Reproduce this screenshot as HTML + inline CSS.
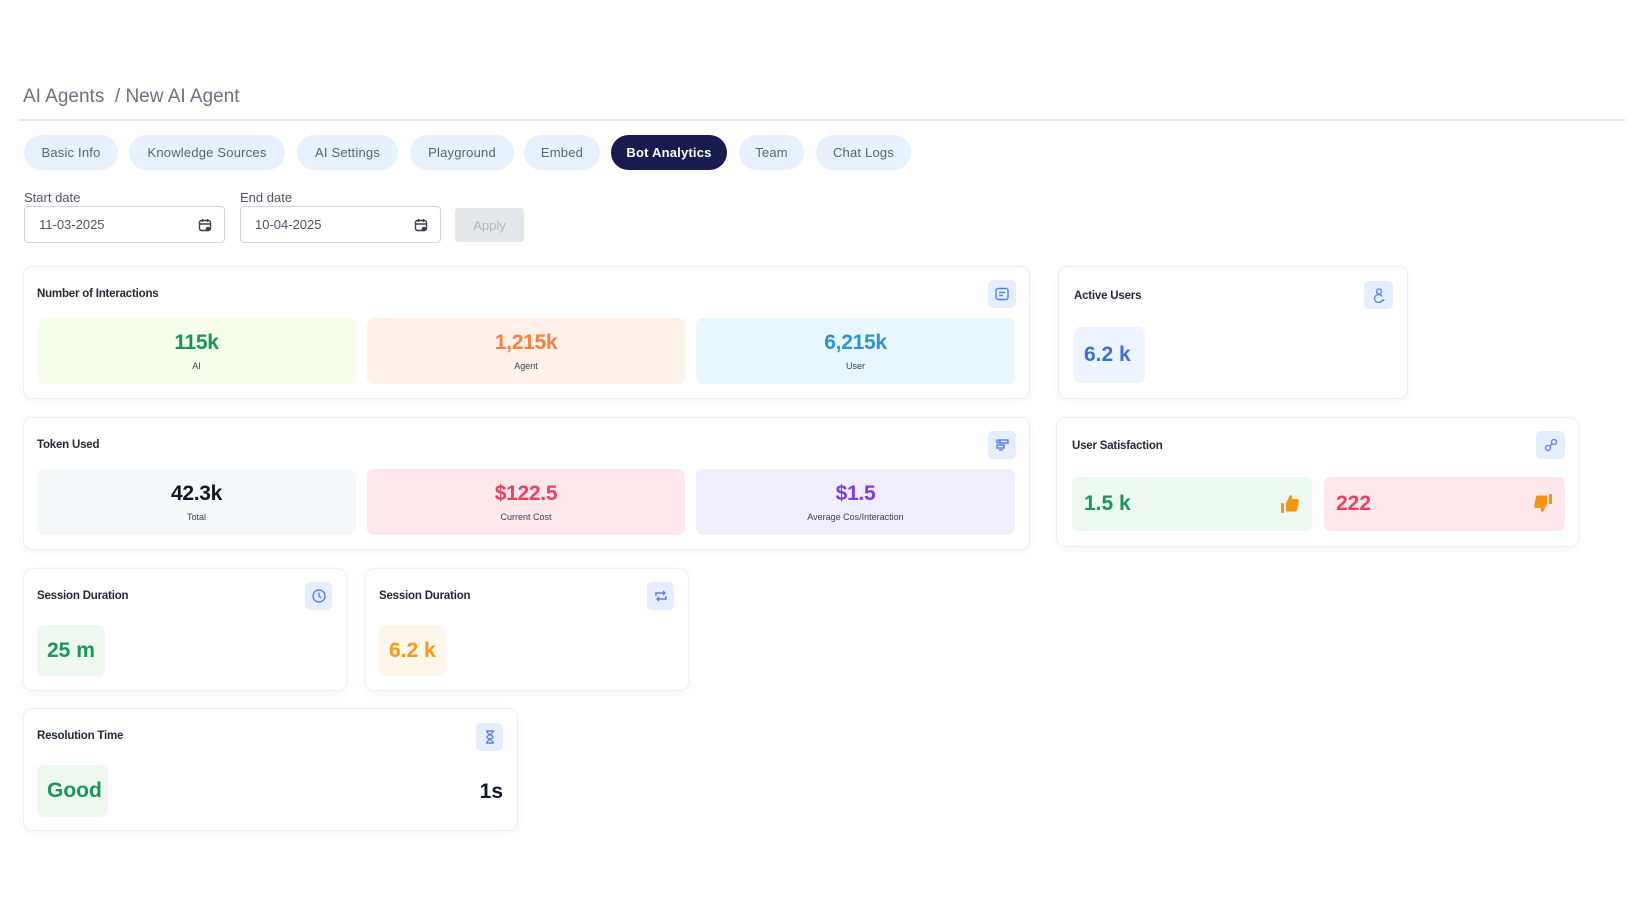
<!DOCTYPE html>
<html><head><meta charset="utf-8"><style>
*{box-sizing:border-box;margin:0;padding:0}
body{width:1632px;height:922px;background:#fff;font-family:"Liberation Sans",sans-serif;position:relative;overflow:hidden;color:#1f2937}
.a{position:absolute}
.crumb{left:23px;top:86px;font-size:19px;color:#6b7280}
.sep{left:19px;top:119px;width:1606px;height:2px;background:#e5e7eb}
.pill{position:absolute;top:135px;height:35px;border-radius:18px;background:#e7f1fd;color:#5b6472;font-size:13px;display:flex;align-items:center;justify-content:center;letter-spacing:.2px}
.pill.on{background:#181b4d;color:#fff;font-weight:bold}
.lbl{font-size:13px;color:#4b5563;top:190px}
.inp{top:206px;height:37px;border:1px solid #d1d5db;border-radius:4px;font-size:13px;color:#4b5563;padding-left:14px;display:flex;align-items:center}
.inp svg{position:absolute;right:12px;top:11px}
.apply{left:455px;top:208px;width:69px;height:34px;background:#e5e7eb;border-radius:3px;color:#b0b5bb;font-size:13px;display:flex;align-items:center;justify-content:center}
.card{position:absolute;background:#fff;border:1px solid #eef0f2;border-radius:9px;box-shadow:0 2px 10px rgba(0,0,0,.04)}
.t{position:absolute;font-size:11.5px;font-weight:bold;color:#1f2937;letter-spacing:-.2px}
.ib{position:absolute;width:28px;height:28px;border-radius:5px;background:#e5eefe;display:flex;align-items:center;justify-content:center}
.box{position:absolute;border-radius:7px;display:flex;flex-direction:column;align-items:center;justify-content:center}
.box b{font-size:21px;font-weight:bold;letter-spacing:-.3px}
.box span{font-size:9px;color:#374151;margin-top:6px}
.vb{position:absolute;border-radius:7px;display:flex;align-items:center;padding-left:10px;font-size:21px;font-weight:bold}
</style></head><body>
<div class="a crumb">AI Agents &nbsp;/ New AI Agent</div>
<div class="a sep"></div>
<div class="pill" style="left:24px;width:94px">Basic Info</div>
<div class="pill" style="left:129px;width:156px">Knowledge Sources</div>
<div class="pill" style="left:297px;width:101px">AI Settings</div>
<div class="pill" style="left:410px;width:104px">Playground</div>
<div class="pill" style="left:524px;width:76px">Embed</div>
<div class="pill on" style="left:611px;width:116px">Bot Analytics</div>
<div class="pill" style="left:739px;width:65px">Team</div>
<div class="pill" style="left:816px;width:95px">Chat Logs</div>

<div class="a lbl" style="left:24px">Start date</div>
<div class="a lbl" style="left:240px">End date</div>
<div class="a inp" style="left:24px;width:201px">11-03-2025<svg width="14" height="14" viewBox="0 0 14 14" fill="none" stroke="#374151" stroke-width="1.4"><rect x="1.5" y="2.5" width="11" height="10" rx="2"/><path d="M1.5 6h11M4.5 1v3M9.5 1v3"/><circle cx="10" cy="11" r="1.6" fill="#374151"/></svg></div>
<div class="a inp" style="left:240px;width:201px">10-04-2025<svg width="14" height="14" viewBox="0 0 14 14" fill="none" stroke="#374151" stroke-width="1.4"><rect x="1.5" y="2.5" width="11" height="10" rx="2"/><path d="M1.5 6h11M4.5 1v3M9.5 1v3"/><circle cx="10" cy="11" r="1.6" fill="#374151"/></svg></div>
<div class="a apply">Apply</div>

<div class="card" style="left:23px;top:266px;width:1007px;height:133px"></div>
<div class="t" style="left:37px;top:288px">Number of Interactions</div>
<div class="ib" style="left:988px;top:280px"><svg width="16" height="16" viewBox="0 0 16 16" fill="none" stroke="#5b7ff0" stroke-width="1.4"><rect x="2" y="2.5" width="12" height="11" rx="2"/><path d="M5 6.5h6M5 9.5h4"/></svg></div>
<div class="box" style="left:37px;top:318px;width:319px;height:66px;background:#f6fdea"><b style="color:#17975a">115k</b><span>AI</span></div>
<div class="box" style="left:367px;top:318px;width:318px;height:66px;background:#fff1ea"><b style="color:#f7813f">1,215k</b><span>Agent</span></div>
<div class="box" style="left:696px;top:318px;width:319px;height:66px;background:#eaf6fe"><b style="color:#2b96d0">6,215k</b><span>User</span></div>

<div class="card" style="left:23px;top:417px;width:1007px;height:133px"></div>
<div class="t" style="left:37px;top:439px">Token Used</div>
<div class="ib" style="left:988px;top:431px"><svg width="16" height="16" viewBox="0 0 16 16" fill="none" stroke="#5b7ff0" stroke-width="1.4"><path d="M6 3h8v3H6zM3 8h7v3H3z"/><circle cx="4" cy="4.5" r="1.5"/><path d="M5 13h4"/></svg></div>
<div class="box" style="left:37px;top:469px;width:319px;height:66px;background:#f7f8f9"><b style="color:#111827">42.3k</b><span>Total</span></div>
<div class="box" style="left:367px;top:469px;width:318px;height:66px;background:#ffe8ec"><b style="color:#f23e5f">$122.5</b><span>Current Cost</span></div>
<div class="box" style="left:696px;top:469px;width:319px;height:66px;background:#f0edfe"><b style="color:#7c3aed">$1.5</b><span>Average Cos/Interaction</span></div>

<div class="card" style="left:1058px;top:266px;width:350px;height:133px"></div>
<div class="t" style="left:1074px;top:290px">Active Users</div>
<div class="ib" style="left:1364px;top:281px;width:29px"><svg width="16" height="16" viewBox="0 0 16 16" fill="none" stroke="#5b7ff0" stroke-width="1.3"><circle cx="8" cy="4.5" r="2.5"/><path d="M11 9.5a4 4 0 1 0 0 4M11 12.5l1 1.2 1.2-1"/></svg></div>
<div class="vb" style="left:1074px;top:327px;width:71px;height:56px;background:#edf4ff;color:#3a6ee0">6.2 k</div>

<div class="card" style="left:1056px;top:417px;width:523px;height:130px"></div>
<div class="t" style="left:1072px;top:440px">User Satisfaction</div>
<div class="ib" style="left:1536px;top:431px;width:29px"><svg width="16" height="16" viewBox="0 0 16 16" fill="none" stroke="#5b7ff0" stroke-width="1.3"><circle cx="5" cy="11" r="2.5"/><circle cx="11" cy="5" r="2.5"/><path d="M7 9l2-2"/></svg></div>
<div class="vb" style="left:1072px;top:477px;width:240px;height:54px;background:#edf8f1;color:#17975a;padding-left:12px">1.5 k<svg style="position:absolute;right:12px;top:17px" width="20" height="20" viewBox="0 0 20 20" fill="#f59410"><rect x="1" y="9" width="3" height="10" rx="1"/><path d="M6 9l4-8c2 0 2.5 1.5 2 4h5c1.5 0 2 1 1.7 2.5l-1.5 8c-.3 1.3-1 2-2.5 2H6z"/></svg></div>
<div class="vb" style="left:1324px;top:477px;width:241px;height:54px;background:#ffe8ec;color:#f23e5f;padding-left:12px">222<svg style="position:absolute;right:12px;top:16px" width="20" height="20" viewBox="0 0 20 20" fill="#f59410" transform="rotate(180)"><rect x="1" y="9" width="3" height="10" rx="1"/><path d="M6 9l4-8c2 0 2.5 1.5 2 4h5c1.5 0 2 1 1.7 2.5l-1.5 8c-.3 1.3-1 2-2.5 2H6z"/></svg></div>

<div class="card" style="left:23px;top:568px;width:324px;height:123px"></div>
<div class="t" style="left:37px;top:590px">Session Duration</div>
<div class="ib" style="left:305px;top:582px;width:27px"><svg width="16" height="16" viewBox="0 0 16 16" fill="none" stroke="#5b7ff0" stroke-width="1.4"><circle cx="8" cy="8" r="6"/><path d="M8 4.5V8l2 2"/></svg></div>
<div class="vb" style="left:37px;top:625px;width:68px;height:51px;background:#eef8f1;color:#17975a">25 m</div>

<div class="card" style="left:365px;top:568px;width:324px;height:123px"></div>
<div class="t" style="left:379px;top:590px">Session Duration</div>
<div class="ib" style="left:647px;top:582px;width:27px"><svg width="16" height="16" viewBox="0 0 16 16" fill="none" stroke="#5b7ff0" stroke-width="1.4"><path d="M3 8V5h9M10 3l2 2-2 2M13 8v3H4M6 13l-2-2 2-2"/></svg></div>
<div class="vb" style="left:379px;top:625px;width:66px;height:51px;background:#fff7ec;color:#f59a17">6.2 k</div>

<div class="card" style="left:23px;top:708px;width:495px;height:123px"></div>
<div class="t" style="left:37px;top:730px">Resolution Time</div>
<div class="ib" style="left:476px;top:723px;width:27px"><svg width="16" height="16" viewBox="0 0 16 16" fill="none" stroke="#5b7ff0" stroke-width="1.4"><path d="M4 2h8M4 14h8M5 2c0 4 6 4 6 6s-6 2-6 6M11 2c0 4-6 4-6 6s6 2 6 6"/></svg></div>
<div class="vb" style="left:37px;top:765px;width:71px;height:52px;background:#eef8f1;color:#17975a">Good</div>
<div class="a" style="left:460px;top:780px;width:43px;text-align:right;font-size:21px;font-weight:bold;color:#111827">1s</div>
</body></html>
